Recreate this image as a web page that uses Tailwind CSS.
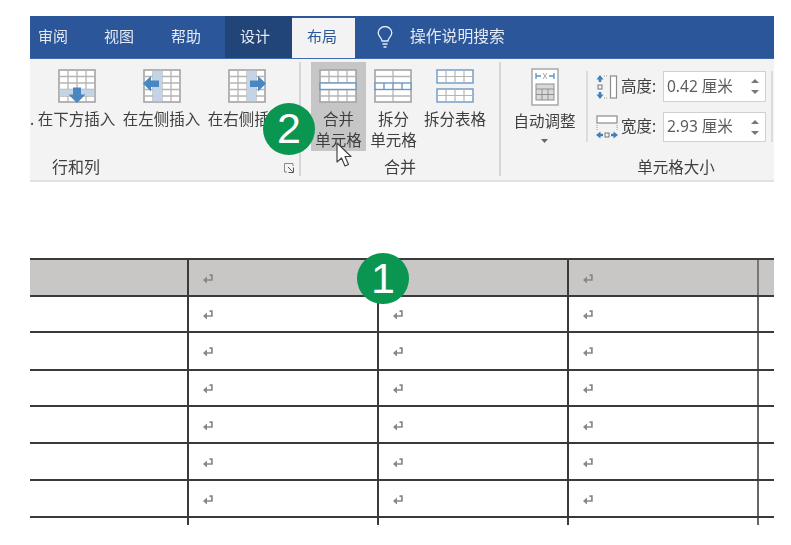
<!DOCTYPE html>
<html lang="zh-CN">
<head>
  <meta charset="UTF-8">
  <title>布局</title>
  <script src="https://cdn.jsdelivr.net/npm/@tailwindcss/browser@4"></script>
</head>
<body class="bg-white w-[791px] h-[545px] overflow-hidden font-['Noto_Sans','Noto_Sans_CJK_SC',sans-serif]">
  <svg class="hidden">
    <symbol id="ret" viewBox="0 -1 10 10" overflow="visible">
      <path d="M6.500 1.200h2.400v4.800H3" fill="none" stroke="#888" stroke-width="1.700"/>
      <path d="M0 6 4 2.400v7.200z" fill="#888"/>
    </symbol>
    <symbol id="grid" viewBox="0 0 38 34">
      <rect x="1" y="1" width="36" height="32" fill="#fff" stroke="#a3a3a3" stroke-width="1.6"/>
      <path d="M10 1v32M19 1v32M28 1v32M1 7.5h36M1 14h36M1 20.5h36M1 27h36" stroke="#b5b5b5" stroke-width="1.3" fill="none"/>
    </symbol>
  </svg>

  <div class="relative w-[744px] ml-[30px] pt-[16px]">
    <!-- tabs -->
    <div class="flex h-[42px] bg-[#2b579a] text-[15px] text-[#e4e9f3]">
      <div class="w-[66px] pl-[8px] leading-[40px] blur-[0.3px]">审阅</div>
      <div class="w-[67px] pl-[8px] leading-[40px] blur-[0.3px]">视图</div>
      <div class="w-[62px] pl-[8px] leading-[40px] blur-[0.3px]">帮助</div>
      <div class="w-[67px] pl-[15px] leading-[40px] bg-[#224579]"><span class="blur-[0.3px] block">设计</span></div>
      <div class="w-[63px] mt-[2px] pl-[15px] leading-[36px] bg-[#f3f3f3] text-[#2b579a]"><span class="blur-[0.3px] block">布局</span></div>
      <svg class="ml-[22px] mt-[10px] w-[16px] h-[22px]" viewBox="0 0 16 22" fill="none" stroke="#e8edf5" stroke-width="1.3">
        <path d="M5 15c0-3-3.800-4.500-3.800-8.200a6.800 6.200 0 0 1 13.600 0c0 3.700-3.800 5.200-3.800 8.200z"/>
        <path d="M5.500 18h5M6.500 21h3"/>
      </svg>
      <div class="ml-[17px] text-[15.8px] leading-[40px] blur-[0.3px]">操作说明搜索</div>
    </div>

    <!-- ribbon -->
    <div class="flex h-[124px] bg-[#f3f3f3] border-t border-[#3f6cae] border-b-2 border-b-[#e2e2e2] text-[15.5px] text-[#3f3f3f]">
      <!-- 行和列 -->
      <div class="relative w-[271px] h-[114px] mt-[3px] border-r-2 border-[#d6d6d6]">
        <span class="absolute left-0 top-[47px] leading-[21px] blur-[0.3px]">.</span>
        <div class="flex pl-[4px]">
          <div class="w-[85px] h-[89px] flex flex-col items-center pt-[7px]">
            <svg class="w-[38px] h-[34px]" viewBox="0 0 38 34">
              <use href="#grid"/>
              <rect x="1.800" y="20.500" width="34.400" height="6.500" fill="#c3d4e6"/>
              <path d="M15 18.500h8v7h4.500L19 34l-8.500-8.500H15z" fill="#4a86c0"/>
            </svg>
            <div class="mt-[6px] leading-[21px] whitespace-nowrap blur-[0.3px]">在下方插入</div>
          </div>
          <div class="w-[85px] h-[89px] flex flex-col items-center pt-[7px]">
            <svg class="w-[38px] h-[34px]" viewBox="0 0 38 34">
              <use href="#grid"/>
              <rect x="10" y="1.800" width="9" height="30.400" fill="#c3d4e6"/>
              <path d="M0 14.500 8 7v4.500h8v6.500H8v4.500z" fill="#4a86c0"/>
            </svg>
            <div class="mt-[6px] leading-[21px] whitespace-nowrap blur-[0.3px]">在左侧插入</div>
          </div>
          <div class="w-[85px] h-[89px] flex flex-col items-center pt-[7px]">
            <svg class="w-[38px] h-[34px]" viewBox="0 0 38 34">
              <use href="#grid"/>
              <rect x="19" y="1.800" width="9" height="30.400" fill="#c3d4e6"/>
              <path d="M38 14.500 30 7v4.500h-8v6.500h8v4.500z" fill="#4a86c0"/>
            </svg>
            <div class="mt-[6px] leading-[21px] whitespace-nowrap blur-[0.3px]">在右侧插入</div>
          </div>
        </div>
        <div class="flex justify-between mt-[7px] pl-[22px] pr-[5px]">
          <div class="leading-[18px] text-[16px] blur-[0.3px]">行和列</div>
          <svg class="w-[10px] h-[10px] mt-[5px]" viewBox="0 0 10 10" fill="none" stroke="#8a8a8a">
            <path d="M9 3V.5H.5V9H3"/>
            <path d="M4 4l4.500 4.500M9.500 4.500v5h-5" stroke="#555"/>
          </svg>
        </div>
      </div>

      <!-- 合并 -->
      <div class="w-[200px] h-[114px] mt-[3px] border-r-2 border-[#d6d6d6]">
        <div class="flex pl-[10px] h-[89px]">
          <div class="w-[55px] h-[89px] bg-[#c6c6c6] flex flex-col items-center pt-[7px]">
            <svg class="w-[38px] h-[34px] -translate-x-[1px]" viewBox="0 0 38 34">
              <use href="#grid"/>
              <rect x="1" y="14" width="36" height="6.500" fill="#fff" stroke="#6f97c6" stroke-width="1.400"/>
            </svg>
            <div class="mt-[6px] leading-[21px] text-center whitespace-nowrap blur-[0.3px]">合并<br>单元格</div>
          </div>
          <div class="w-[55px] flex flex-col items-center pt-[7px]">
            <svg class="w-[38px] h-[34px] -translate-x-[1px]" viewBox="0 0 38 34">
              <rect x="1" y="1" width="36" height="32" fill="#fff" stroke="#a3a3a3" stroke-width="1.600"/>
              <path d="M19 1v32M1 7.500h36M1 27h36" stroke="#b5b5b5" stroke-width="1.300" fill="none"/>
              <rect x="1" y="14" width="36" height="6.500" fill="#fff" stroke="#6f97c6" stroke-width="1.400"/>
              <path d="M10 14v6.500M19 14v6.500M28 14v6.500" stroke="#6f97c6" stroke-width="1.400"/>
            </svg>
            <div class="mt-[6px] leading-[21px] text-center whitespace-nowrap blur-[0.3px]">拆分<br>单元格</div>
          </div>
          <div class="w-[68px] flex flex-col items-center pt-[7px]">
            <svg class="w-[38px] h-[34px]" viewBox="0 0 38 34" fill="none">
              <rect x="1" y="1" width="36" height="13" fill="#fff" stroke="#6f97c6" stroke-width="1.400"/>
              <rect x="1" y="20" width="36" height="13" fill="#fff" stroke="#6f97c6" stroke-width="1.400"/>
              <path d="M10 1v13M19 1v13M28 1v13M1 7.500h36M10 20v13M19 20v13M28 20v13M1 26.500h36" stroke="#b5b5b5" stroke-width="1.200"/>
            </svg>
            <div class="mt-[6px] leading-[21px] whitespace-nowrap blur-[0.3px]">拆分表格</div>
          </div>
        </div>
        <div class="mt-[7px] leading-[18px] text-[16px] text-center blur-[0.3px]">合并</div>
      </div>

      <!-- 单元格大小 -->
      <div class="flex-1 h-[114px] mt-[3px]">
        <div class="flex h-[89px]">
          <div class="w-[85px] pl-[2px] flex flex-col items-center pt-[6px] shrink-0">
            <svg class="w-[28px] h-[38px]" viewBox="0 0 28 38" fill="none">
              <rect x="1" y="1" width="26" height="36" fill="#fff" stroke="#a3a3a3" stroke-width="1.400"/>
              <path d="M5 8h5M18 8h5M5 5v6M23 5v6" stroke="#5a93c8" stroke-width="1.300"/>
              <path d="M12 5l4 6M16 5l-4 6" stroke="#a8a8a8"/>
              <rect x="5" y="16" width="18" height="16" fill="#d9d9d9" stroke="#8f8f8f"/>
              <path d="M5 21h18M5 26.500h18M11 21v11M17 21v11" stroke="#8f8f8f"/>
            </svg>
            <div class="mt-[5px] leading-[21px] whitespace-nowrap blur-[0.3px]">自动调整</div>
            <svg class="w-[7px] h-[4px] mt-[7px]" viewBox="0 0 7 4"><path d="M0 0h7L3.500 4z" fill="#666"/></svg>
          </div>
          <div class="w-[2px] h-[71px] mt-[9px] bg-[#dcdcdc] shrink-0"></div>
          <div class="pl-[8px] pt-[9px] flex flex-col gap-[10px]">
            <div class="flex items-center h-[31px]">
              <svg class="w-[22px] h-[24px]" viewBox="0 0 22 24" fill="none">
                <path d="M4 0 .5 4.500h2.200V7h2.600V4.500h2.200zM4 24 .5 19.500h2.200V17h2.600v2.500h2.200z" fill="#3f7fbb"/>
                <rect x="2" y="10" width="4" height="4" stroke="#777"/>
                <path d="M8 1h4M8 23h4" stroke="#999" stroke-dasharray="1 1"/>
                <rect x="14.500" y="1" width="6" height="22" fill="#fff" stroke="#8c8c8c" stroke-width="1.200"/>
              </svg>
              <div class="ml-[3px] w-[42px] blur-[0.3px]">高度:</div>
              <div class="w-[103px] h-[31px] bg-white border border-[#d0d0d0] flex items-center justify-between pl-[3px] pr-[6px] text-[#5c5c5c]">
                <span class="blur-[0.3px]">0.42 厘米</span>
                <svg class="w-[8px] h-[15px]" viewBox="0 0 8 15"><path d="M0 4 4 0l4 4zM0 11h8l-4 4z" fill="#777"/></svg>
              </div>
            </div>
            <div class="flex items-center h-[30px]">
              <svg class="w-[22px] h-[24px]" viewBox="0 0 22 24" fill="none">
                <rect x="1" y="1" width="20" height="7" fill="#fff" stroke="#8c8c8c" stroke-width="1.200"/>
                <path d="M1 10v6M21 10v6" stroke="#999" stroke-dasharray="1 1"/>
                <path d="M0 20l4.500-3.500v2.200H7v2.600H4.500v2.200zM22 20l-4.500-3.500v2.200H15v2.600h2.500v2.200z" fill="#3f7fbb"/>
                <rect x="9" y="18" width="4" height="4" stroke="#777"/>
              </svg>
              <div class="ml-[3px] w-[42px] blur-[0.3px]">宽度:</div>
              <div class="w-[103px] h-[30px] bg-white border border-[#d0d0d0] flex items-center justify-between pl-[3px] pr-[6px] text-[#5c5c5c]">
                <span class="blur-[0.3px]">2.93 厘米</span>
                <svg class="w-[8px] h-[15px]" viewBox="0 0 8 15"><path d="M0 4 4 0l4 4zM0 11h8l-4 4z" fill="#777"/></svg>
              </div>
            </div>
          </div>
          <div class="w-[2px] h-[71px] mt-[9px] ml-[5px] bg-[#dcdcdc] shrink-0"></div>
        </div>
        <div class="mt-[7px] ml-[86px] w-[178px] leading-[18px] text-[15.5px] text-center blur-[0.3px]">单元格大小</div>
      </div>
    </div>

    <!-- table -->
    <div class="mt-[76px] h-[267px] overflow-hidden">
      <div class="grid grid-cols-[157px_380px_190px_17px] h-[37px] border-t-2 border-[#3a3a3a] bg-[#c8c7c5]">
        <div></div>
        <div class="border-l-2 border-[#3a3a3a] pl-[14px] flex items-center"><svg class="w-[10px] h-[10px]"><use href="#ret"/></svg></div>
        <div class="border-l-2 border-[#3a3a3a] pl-[14px] flex items-center"><svg class="w-[10px] h-[10px]"><use href="#ret"/></svg></div>
        <div class="border-l-2 border-[#777]"></div>
      </div>
      <div class="grid grid-cols-[157px_190px_190px_190px_17px] h-[36px] border-t-2 border-[#3a3a3a]">
        <div></div>
        <div class="border-l-2 border-[#3a3a3a] pl-[14px] flex items-center"><svg class="w-[10px] h-[10px]"><use href="#ret"/></svg></div>
        <div class="border-l-2 border-[#3a3a3a] pl-[14px] flex items-center"><svg class="w-[10px] h-[10px]"><use href="#ret"/></svg></div>
        <div class="border-l-2 border-[#3a3a3a] pl-[14px] flex items-center"><svg class="w-[10px] h-[10px]"><use href="#ret"/></svg></div>
        <div class="border-l-2 border-[#666]"></div>
      </div>
      <div class="grid grid-cols-[157px_190px_190px_190px_17px] h-[38px] border-t-2 border-[#3a3a3a]">
        <div></div>
        <div class="border-l-2 border-[#3a3a3a] pl-[14px] flex items-center"><svg class="w-[10px] h-[10px]"><use href="#ret"/></svg></div>
        <div class="border-l-2 border-[#3a3a3a] pl-[14px] flex items-center"><svg class="w-[10px] h-[10px]"><use href="#ret"/></svg></div>
        <div class="border-l-2 border-[#3a3a3a] pl-[14px] flex items-center"><svg class="w-[10px] h-[10px]"><use href="#ret"/></svg></div>
        <div class="border-l-2 border-[#666]"></div>
      </div>
      <div class="grid grid-cols-[157px_190px_190px_190px_17px] h-[36px] border-t-2 border-[#3a3a3a]">
        <div></div>
        <div class="border-l-2 border-[#3a3a3a] pl-[14px] flex items-center"><svg class="w-[10px] h-[10px]"><use href="#ret"/></svg></div>
        <div class="border-l-2 border-[#3a3a3a] pl-[14px] flex items-center"><svg class="w-[10px] h-[10px]"><use href="#ret"/></svg></div>
        <div class="border-l-2 border-[#3a3a3a] pl-[14px] flex items-center"><svg class="w-[10px] h-[10px]"><use href="#ret"/></svg></div>
        <div class="border-l-2 border-[#666]"></div>
      </div>
      <div class="grid grid-cols-[157px_190px_190px_190px_17px] h-[37px] border-t-2 border-[#3a3a3a]">
        <div></div>
        <div class="border-l-2 border-[#3a3a3a] pl-[14px] flex items-center"><svg class="w-[10px] h-[10px]"><use href="#ret"/></svg></div>
        <div class="border-l-2 border-[#3a3a3a] pl-[14px] flex items-center"><svg class="w-[10px] h-[10px]"><use href="#ret"/></svg></div>
        <div class="border-l-2 border-[#3a3a3a] pl-[14px] flex items-center"><svg class="w-[10px] h-[10px]"><use href="#ret"/></svg></div>
        <div class="border-l-2 border-[#666]"></div>
      </div>
      <div class="grid grid-cols-[157px_190px_190px_190px_17px] h-[37px] border-t-2 border-[#3a3a3a]">
        <div></div>
        <div class="border-l-2 border-[#3a3a3a] pl-[14px] flex items-center"><svg class="w-[10px] h-[10px]"><use href="#ret"/></svg></div>
        <div class="border-l-2 border-[#3a3a3a] pl-[14px] flex items-center"><svg class="w-[10px] h-[10px]"><use href="#ret"/></svg></div>
        <div class="border-l-2 border-[#3a3a3a] pl-[14px] flex items-center"><svg class="w-[10px] h-[10px]"><use href="#ret"/></svg></div>
        <div class="border-l-2 border-[#666]"></div>
      </div>
      <div class="grid grid-cols-[157px_190px_190px_190px_17px] h-[37px] border-t-2 border-[#3a3a3a]">
        <div></div>
        <div class="border-l-2 border-[#3a3a3a] pl-[14px] flex items-center"><svg class="w-[10px] h-[10px]"><use href="#ret"/></svg></div>
        <div class="border-l-2 border-[#3a3a3a] pl-[14px] flex items-center"><svg class="w-[10px] h-[10px]"><use href="#ret"/></svg></div>
        <div class="border-l-2 border-[#3a3a3a] pl-[14px] flex items-center"><svg class="w-[10px] h-[10px]"><use href="#ret"/></svg></div>
        <div class="border-l-2 border-[#666]"></div>
      </div>
      <div class="grid grid-cols-[157px_190px_190px_190px_17px] h-[9px] border-t-2 border-[#3a3a3a]">
        <div></div>
        <div class="border-l-2 border-[#3a3a3a]"></div>
        <div class="border-l-2 border-[#3a3a3a]"></div>
        <div class="border-l-2 border-[#3a3a3a]"></div>
        <div class="border-l-2 border-[#666]"></div>
      </div>
    </div>

    <!-- callouts and pointer, over the content -->
    <div class="absolute left-[233px] top-[103px] w-[52px] h-[52px] rounded-full bg-[#0a9650] text-white text-[43px] leading-[51px] text-center font-['Liberation_Sans',sans-serif]">2</div>
    <div class="absolute left-[327px] top-[253px] w-[52px] h-[51px] rounded-full bg-[#0a9650] text-white text-[43px] leading-[50px] text-center font-['Liberation_Sans',sans-serif]">1</div>
    <svg class="absolute left-[306px] top-[142px] w-[17px] h-[25px]" viewBox="0 0 17 25">
      <path d="M1 1v19l4.500-4 3.500 8 3.500-1.500-3.500-8H15z" fill="#fff" stroke="#444" stroke-width="1.200" stroke-linejoin="round"/>
    </svg>
  </div>
</body>
</html>
